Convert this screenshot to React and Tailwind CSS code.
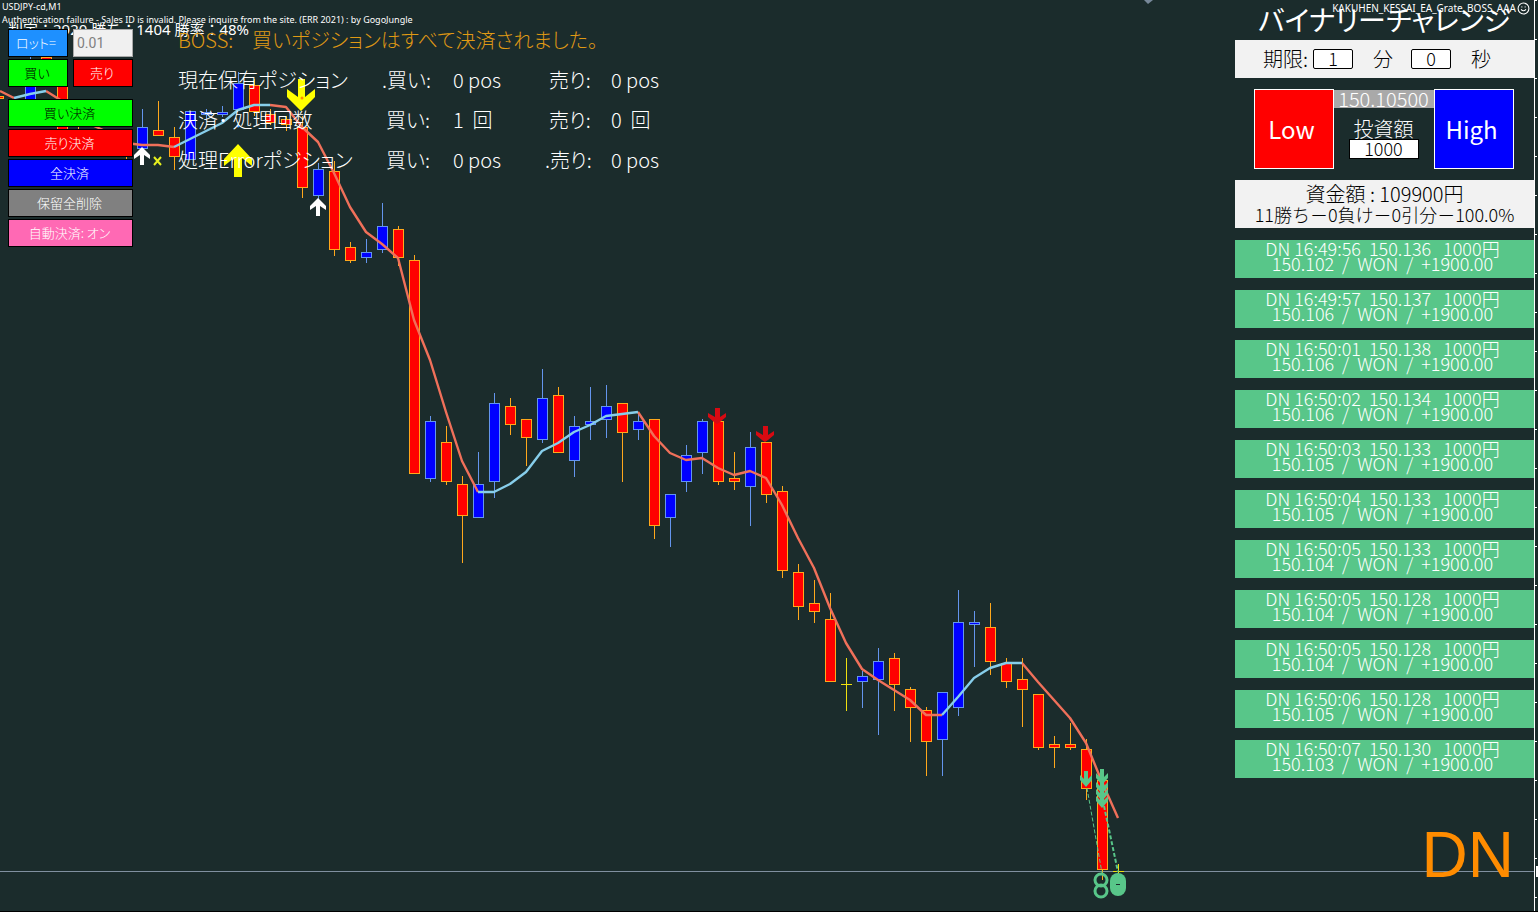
import React, { useState } from 'react';
import { Smile } from 'lucide-react';

// [x, high, body top, body bottom, low, direction]
const candles = [
  [-2, 96, 96, 98, 98, 'down'],
  [30, 57, 62, 108, 112, 'up'],
  [46, 55, 57, 70, 74, 'down'],
  [62, 80, 85, 130, 134, 'down'],
  [78, 120, 131, 140, 146, 'down'],
  [126, 140, 144, 152, 159, 'down'],
  [142, 109, 127, 148, 148, 'up'],
  [158, 101, 130, 135, 135, 'down'],
  [174, 127, 137, 156, 169, 'down'],
  [190, 111, 111, 159, 159, 'up'],
  [206, 109, 112, 114, 118, 'up'],
  [222, 106, 112, 114, 116, 'up'],
  [238, 72, 83, 109, 109, 'up'],
  [254, 79, 85, 111, 115, 'down'],
  [270, 109, 114, 122, 124, 'down'],
  [286, 116, 119, 124, 130, 'down'],
  [302, 116, 127, 187, 197, 'down'],
  [318, 163, 169, 195, 198, 'up'],
  [334, 161, 171, 249, 255, 'down'],
  [350, 242, 247, 260, 262, 'down'],
  [366, 239, 252, 257, 262, 'up'],
  [382, 203, 226, 249, 252, 'up'],
  [398, 226, 229, 257, 265, 'down'],
  [414, 255, 260, 473, 473, 'down'],
  [430, 416, 421, 478, 481, 'up'],
  [446, 426, 442, 481, 484, 'down'],
  [462, 476, 484, 515, 562, 'down'],
  [478, 452, 484, 517, 517, 'up'],
  [494, 393, 403, 481, 497, 'up'],
  [510, 398, 406, 424, 434, 'down'],
  [526, 419, 419, 437, 465, 'down'],
  [542, 369, 398, 439, 442, 'up'],
  [558, 387, 395, 452, 452, 'down'],
  [574, 416, 426, 460, 476, 'up'],
  [590, 387, 421, 424, 439, 'up'],
  [606, 385, 406, 419, 437, 'up'],
  [622, 403, 403, 432, 481, 'down'],
  [638, 413, 421, 429, 439, 'up'],
  [654, 419, 419, 525, 538, 'down'],
  [670, 494, 494, 517, 546, 'up'],
  [686, 445, 455, 481, 491, 'up'],
  [702, 419, 421, 452, 473, 'up'],
  [718, 419, 421, 481, 484, 'down'],
  [734, 452, 478, 481, 489, 'down'],
  [750, 432, 447, 486, 525, 'up'],
  [766, 442, 442, 494, 502, 'down'],
  [782, 486, 491, 570, 577, 'down'],
  [798, 564, 572, 606, 619, 'down'],
  [814, 580, 603, 611, 622, 'down'],
  [830, 593, 619, 681, 681, 'down'],
  [846, 658, 684, 684, 710, 'flat'],
  [862, 671, 676, 681, 707, 'up'],
  [878, 648, 661, 679, 734, 'up'],
  [894, 653, 658, 684, 710, 'down'],
  [910, 687, 689, 707, 741, 'down'],
  [926, 707, 710, 741, 775, 'down'],
  [942, 692, 692, 739, 775, 'up'],
  [958, 590, 622, 707, 715, 'up'],
  [974, 611, 622, 624, 666, 'up'],
  [990, 603, 627, 661, 674, 'down'],
  [1006, 658, 663, 681, 687, 'down'],
  [1022, 658, 679, 689, 726, 'down'],
  [1038, 694, 694, 747, 749, 'down'],
  [1054, 736, 744, 747, 767, 'down'],
  [1070, 723, 744, 747, 749, 'down'],
  [1086, 739, 749, 788, 799, 'down'],
  [1102, 780, 780, 869, 879, 'down'],
  [1118, 864, 871, 871, 876, 'flat'],
];

const strokes = { up: '#6495ed', down: '#ffa81c', flat: '#f0e010' };
const fills = { up: '#0000ff', down: '#ff0000', flat: 'none' };

const fallingAverage = [
  '0,91 14,98',
  '46,91 62,101 78,117 94,126 110,133 126,143 142,145 158,145 174,147',
  '270,105 286,107 302,127 318,142 334,173 350,207 366,232 382,244 398,258 414,320 430,360 446,412 462,461 478,492',
  '638,412 654,436 670,453 686,460 702,458 718,468 734,475 750,471 766,478 782,505 798,538 814,568 830,608 846,643 862,669 878,680 894,690 910,700 926,715 942,715',
  '1022,663 1038,682 1054,700 1070,718 1086,743 1102,782 1118,818',
];

const risingAverage = [
  '14,98 30,94 46,91',
  '174,147 190,139 206,131 222,123 238,110 254,105 270,105',
  '478,492 494,492 510,484 526,472 542,451 558,443 574,432 590,425 606,416 622,414 638,412',
  '942,715 958,697 974,678 990,668 1006,663 1022,663',
];

const BIG_UP = 'M0 0 L14 15 V22 L4 14 V33 H-4 V14 L-14 22 V15Z';
const BIG_DOWN = 'M-3 0 H4 V18 L14 10 V18 L0 32 L-14 18 V10 L-3 18Z';
const SMALL_UP = 'M0 0 L8 8 V12 L2 8 V18 H-2 V8 L-8 12 V8Z';
const SMALL_DOWN = 'M-2 0 H3 V9 L9 5 V9 L3 14 L0 16 L-3 14 L-9 9 V5 L-2 9Z';
const TRADE_DOWN = 'M-2 0 H2 V8 L6 4 V9 L0 16 L-6 9 V4 L-2 8Z';

const history = [
  ['16:49:56', '150.136', '150.102'],
  ['16:49:57', '150.137', '150.106'],
  ['16:50:01', '150.138', '150.106'],
  ['16:50:02', '150.134', '150.106'],
  ['16:50:03', '150.133', '150.105'],
  ['16:50:04', '150.133', '150.105'],
  ['16:50:05', '150.133', '150.104'],
  ['16:50:05', '150.128', '150.104'],
  ['16:50:05', '150.128', '150.104'],
  ['16:50:06', '150.128', '150.105'],
  ['16:50:07', '150.130', '150.103'],
];

const statusRows = [
  { label: '現在保有ポジション', buyDot: true, buy: '0 pos', sell: '0 pos' },
  { label: '決済･ 処理回数', buy: '1  回', sell: '0  回' },
  { label: '処理Errorポジション', sellDot: true, buy: '0 pos', sell: '0 pos' },
];

const Candle = ({ data }) => {
  const [x, high, top, bottom, low, type] = data;
  const stroke = strokes[type];
  return (
    <g stroke={stroke} fill={fills[type]} shapeRendering="crispEdges">
      <path d={`M${x + 0.5} ${high} V${low + 1}`} />
      {type === 'flat' ? (
        <path d={`M${x - 5} ${top + 0.5} H${x + 6}`} />
      ) : (
        <rect x={x - 4.5} y={top + 0.5} width="10" height={bottom - top} />
      )}
    </g>
  );
};

const Chart = () => (
  <svg className="absolute inset-0 w-full h-full" viewBox="0 0 1538 912" preserveAspectRatio="xMinYMin slice" aria-hidden="true">
    <path d="M0 871.5 H1535" stroke="#8090a0" shapeRendering="crispEdges" />
    <path d="M1144 0 H1153 L1148 4Z" fill="#778899" />
    {candles.map((c) => <Candle key={c[0]} data={c} />)}

    <g fill="none" strokeWidth="2.4" strokeLinejoin="round">
      {fallingAverage.map((points) => <polyline key={points} points={points} stroke="#f0705a" />)}
      {risingAverage.map((points) => <polyline key={points} points={points} stroke="#87ceeb" />)}
    </g>

    <g fill="#ffff00">
      <path d={BIG_UP} transform="translate(238 144)" />
      <path d={BIG_DOWN} transform="translate(301 79)" />
    </g>
    <circle cx="302" cy="98" r="1.5" fill="#ff8c00" />
    <circle cx="238" cy="126" r="1.5" fill="#1e90ff" />
    <g fill="#ffffff">
      <path d={SMALL_UP} transform="translate(142 147)" />
      <path d={SMALL_UP} transform="translate(318 198)" />
    </g>
    <path d="M154 157 L161 165 M161 157 L154 165" stroke="#e6f01e" strokeWidth="2" />
    <g fill="#d80a12">
      <path d={SMALL_DOWN} transform="translate(717 408)" />
      <path d={SMALL_DOWN} transform="translate(765 426)" />
    </g>

    <g fill="#58c689">
      <path d={TRADE_DOWN} transform="translate(1086 771)" />
      {[769, 778, 785, 792].map((y) => <path key={y} d={TRADE_DOWN} transform={`translate(1102 ${y})`} />)}
      <rect x="1110" y="873" width="16" height="23" rx="8" />
    </g>
    <path d="M1116 884.5 H1120" stroke="#1b2c2c" />
    <g stroke="#58c689" fill="none">
      <path d="M1087 788 L1102 873" strokeDasharray="4 2" />
      <path d="M1104 806 L1118 872" strokeDasharray="4 2" strokeWidth="2" />
      <circle cx="1101" cy="880" r="6" strokeWidth="3" />
      <circle cx="1101" cy="891" r="6" strokeWidth="3" />
    </g>

    <g stroke="#ffffff" shapeRendering="crispEdges">
      <path d="M1534.5 0 V912" />
      {Array.from({ length: 24 }, (_, i) => <path key={i} d={`M1535 ${i * 39 + 0.5} H1537`} />)}
    </g>
    <rect x="1536" y="866" width="2" height="11" fill="#ffffff" />
  </svg>
);

const PanelButton = ({ color, wide, children }) => (
  <button type="button" className={`h-7 border border-black pr-0.5 text-[13px] leading-4 font-light cursor-pointer ${wide ? 'col-span-2' : ''} ${color}`}>
    {children}
  </button>
);

const OrderPanel = () => {
  const [lot, setLot] = useState('0.01');
  return (
    <div className="w-[125px] shrink-0 grid grid-cols-2 gap-x-[5px] gap-y-[2px] content-start">
      <label htmlFor="lot" className="h-7 border border-black bg-[#1e90ff] text-white text-[13px] font-light pr-1 flex items-center justify-center">ロット=</label>
      <input id="lot" value={lot} onChange={(e) => setLot(e.target.value)} className="h-7 w-full min-w-0 border border-[#a9a9a9] bg-[#f0f0f0] text-[#808080] px-[3px] text-sm font-[Roboto,sans-serif]" />
      <PanelButton color="bg-[#00ff00] text-black mb-2.5">買い</PanelButton>
      <PanelButton color="bg-[#ff0000] text-white mb-2.5">売り</PanelButton>
      <PanelButton wide color="bg-[#00ff00] text-black">買い決済</PanelButton>
      <PanelButton wide color="bg-[#ff0000] text-white">売り決済</PanelButton>
      <PanelButton wide color="bg-[#0000ff] text-white">全決済</PanelButton>
      <PanelButton wide color="bg-[#808080] text-white">保留全削除</PanelButton>
      <PanelButton wide color="bg-[#ff69b4] text-white">自動決済: オン</PanelButton>
    </div>
  );
};

const Status = () => (
  <div className="text-xl text-white font-light whitespace-pre">
    <p className="h-10 flex items-center text-[#e09a14]">
      <span className="w-[74px]">BOSS:</span>
      買いポジションはすべて決済されました。
    </p>
    {statusRows.map((row) => (
      <div key={row.label} className="h-10 grid grid-cols-[204px_71px_92px_66px_auto] items-center">
        <span>{row.label}</span>
        <span className={row.buyDot ? '' : 'pl-1'}>{`${row.buyDot ? '.' : ''}買い:`}</span>
        <span>{row.buy}</span>
        <span className={row.sellDot ? '' : 'pl-1'}>{`${row.sellDot ? '.' : ''}売り:`}</span>
        <span>{row.sell}</span>
      </div>
    ))}
  </div>
);

const Challenge = () => {
  const [minutes, setMinutes] = useState('1');
  const [seconds, setSeconds] = useState('0');
  const [stake, setStake] = useState('1000');

  return (
    <aside className="relative w-[299px] mr-1 shrink-0 flex flex-col text-white">
      <h1 className="h-10 text-center text-[28px] leading-[38px] whitespace-nowrap">バイナリーチャレンジ</h1>

      <div className="h-[38px] bg-[#f2f2f2] text-black text-xl font-light flex items-center pl-7">
        <label htmlFor="minutes" className="w-[50px]">期限:</label>
        <input id="minutes" value={minutes} onChange={(e) => setMinutes(e.target.value)} className="w-10 h-5 pb-0.5 border border-black rounded-xs bg-white text-center text-lg leading-4" />
        <span className="w-[58px] pl-5">分</span>
        <input aria-label="秒" value={seconds} onChange={(e) => setSeconds(e.target.value)} className="w-10 h-5 pb-0.5 border border-black rounded-xs bg-white text-center text-lg leading-4" />
        <span className="pl-5">秒</span>
      </div>

      <div className="mt-[11px] h-20 pr-0.5 flex justify-center">
        <button type="button" className="w-20 pr-1 bg-[#ff0000] border border-white text-2xl cursor-pointer">Low</button>
        <div className="w-[100px] flex flex-col items-center">
          <p className="w-full h-[18px] mt-px bg-[#a9a9a9] text-center text-xl leading-[18px] font-light">150.10500</p>
          <label htmlFor="stake" className="mt-2.5 text-xl leading-[21px] font-light">投資額</label>
          <input id="stake" value={stake} onChange={(e) => setStake(e.target.value)} className="w-[70px] h-5 pb-0.5 border border-black bg-white text-black text-center text-lg leading-4 font-light" />
        </div>
        <button type="button" className="w-20 pr-1 bg-[#0000ff] border border-white text-2xl cursor-pointer">High</button>
      </div>

      <div className="mt-[11px] h-12 pt-1 bg-[#f2f2f2] text-black text-center font-light whitespace-nowrap">
        <p className="text-xl leading-5">資金額 : 109900円</p>
        <p className="text-lg leading-5 [font-feature-settings:normal]">11勝ち－0負け－0引分－100.0%</p>
      </div>

      <ul className="mt-3 flex flex-col gap-3">
        {history.map(([time, entry, exit], i) => (
          <li key={i} className="h-[38px] pt-px pr-1 bg-[#58c689] text-center text-lg leading-[15px] font-light whitespace-pre">
            <p>{`DN ${time}  ${entry}   1000円`}</p>
            <p>{`${exit}  /  WON  /  +1900.00`}</p>
          </li>
        ))}
      </ul>

      <p className="mt-auto mb-5 pr-5 text-right text-[64px] leading-[72px] text-[#ff8c00] font-['Liberation_Sans',Arial,sans-serif]">DN</p>
    </aside>
  );
};

const App = () => (
  <main className="relative min-h-screen flex justify-between overflow-hidden bg-[#1b2c2c] border-b border-black font-['Noto_Sans_CJK_JP',sans-serif] [font-feature-settings:'palt']">
    <Chart />

    <div className="absolute left-0.5 top-0 text-white text-[9px] leading-[13px] whitespace-nowrap font-['Noto_Sans',sans-serif]">
      <p>USDJPY-cd,M1</p>
      <p>Authentication failure - Sales ID is invalid. Please inquire from the site. (ERR 2021) : by GogoJungle</p>
    </div>
    <p className="absolute left-2 top-[19px] text-white text-[15px] leading-5 whitespace-nowrap font-['Noto_Sans','Noto_Sans_CJK_JP',sans-serif] [font-feature-settings:normal]">判定：2920 勝ち：1404 勝率：48%</p>

    <div className="relative flex">
      <div className="pl-2 pt-[29px]">
        <OrderPanel />
      </div>
      <div className="pl-[45px] pt-5">
        <Status />
      </div>
    </div>

    <Challenge />

    <div className="absolute right-2 top-0 h-4 flex items-center gap-px text-white text-[10px] whitespace-nowrap font-['Noto_Sans',sans-serif]">
      KAKUHEN_KESSAI_EA_Grate_BOSS_AAA
      <Smile size={13} strokeWidth={2} />
    </div>
  </main>
);

export default App;
